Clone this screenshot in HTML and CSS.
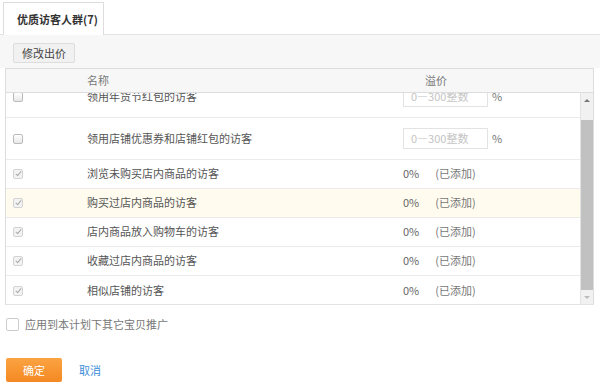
FILE: index.html
```html
<!DOCTYPE html>
<html lang="zh-CN">
<head>
	<meta charset="UTF-8">
	<title>优质访客人群</title>
	<link rel="stylesheet" href="styles.css">
</head>
<body>
	<div class="tabs">
		<div class="tab on">优质访客人群(7)</div>
	</div>
	<div class="toolbar">
		<a href="javascript:;" class="btn">修改出价</a>
	</div>
	<div class="grid">
		<div class="grid-head">
			<span class="cell-chk"></span>
			<span class="cell-name">名称</span>
			<span class="cell-price head-price">溢价</span>
		</div>
		<div class="grid-body">
			<div class="rows">
				<!-- 列表已向下滚动一点，第一行被表头遮住一部分 -->
				<div class="list">
					<div class="row tall">
						<span class="cell-chk"><i class="chk"></i></span>
						<span class="cell-name">领用年货节红包的访客</span>
						<span class="cell-price"><span class="ipt">0—300整数</span><span class="pct">%</span></span>
					</div>
					<div class="row tall">
						<span class="cell-chk"><i class="chk"></i></span>
						<span class="cell-name">领用店铺优惠券和店铺红包的访客</span>
						<span class="cell-price"><span class="ipt">0—300整数</span><span class="pct">%</span></span>
					</div>
					<div class="row">
						<span class="cell-chk"><i class="chk checked"></i></span>
						<span class="cell-name">浏览未购买店内商品的访客</span>
						<span class="cell-price">0%<span class="added">(已添加)</span></span>
					</div>
					<div class="row hover">
						<span class="cell-chk"><i class="chk checked"></i></span>
						<span class="cell-name">购买过店内商品的访客</span>
						<span class="cell-price">0%<span class="added">(已添加)</span></span>
					</div>
					<div class="row">
						<span class="cell-chk"><i class="chk checked"></i></span>
						<span class="cell-name">店内商品放入购物车的访客</span>
						<span class="cell-price">0%<span class="added">(已添加)</span></span>
					</div>
					<div class="row">
						<span class="cell-chk"><i class="chk checked"></i></span>
						<span class="cell-name">收藏过店内商品的访客</span>
						<span class="cell-price">0%<span class="added">(已添加)</span></span>
					</div>
					<div class="row">
						<span class="cell-chk"><i class="chk checked"></i></span>
						<span class="cell-name">相似店铺的访客</span>
						<span class="cell-price">0%<span class="added">(已添加)</span></span>
					</div>
				</div>
			</div>
			<div class="scrollbar">
				<span class="arr up"></span>
				<span class="thumb"></span>
				<span class="arr down"></span>
			</div>
		</div>
	</div>
	<label class="apply"><i class="box"></i>应用到本计划下其它宝贝推广</label>
	<div class="actions">
		<a href="javascript:;" class="btn-ok">确定</a>
		<a href="javascript:;" class="cancel">取消</a>
	</div>
</body>
</html>
```
FILE: styles.css
```css
*{margin:0;padding:0;box-sizing:border-box;text-decoration:none;}
body{font:11px/1.4 "Noto Sans CJK SC","Liberation Sans",sans-serif;color:#555;background:#fff;}
.tabs{padding:2px 0 0 3px;height:34px;}
.tab{width:101px;height:33px;border:1px solid #ddd;border-bottom:none;background:#fff;position:relative;z-index:1;
	font-weight:bold;color:#333;line-height:32px;padding-left:13px;}
.toolbar{height:34px;background:#f7f7f7;border-top:1px solid #e3e3e3;padding:8px 0 0 13px;}
.btn{display:inline-block;height:20px;line-height:18px;padding:0 8px;border:1px solid #ddd;background:#f1f1f1;color:#444;border-radius:2px;}

.grid{width:589px;margin-left:5px;border-left:1px solid #ddd;border-right:1px solid #ddd;border-bottom:1px solid #e3e3e3;}
.grid-head{display:flex;align-items:center;height:25px;background:#f7f7f7;border-top:1px solid #ddd;border-bottom:1px solid #ddd;color:#777;}
.cell-chk{width:81px;padding-left:7px;display:flex;align-items:center;}
.cell-name{width:316px;}
.cell-price{display:flex;align-items:center;color:#666;}
.head-price{padding-left:22px;color:#777;}

.grid-body{display:flex;height:211px;}
.rows{flex:1;overflow:hidden;border-right:1px solid #e3e3e3;}
.list{margin-top:-17px;}
.row{display:flex;align-items:center;height:29px;border-bottom:1px solid #ebebeb;}
.row:last-child{border-bottom:none;}
.row.tall{height:42px;}
.row.hover{background:#fffcef;}

.chk{display:block;width:10px;height:10px;border:1px solid #bbb;border-radius:2px;background:linear-gradient(#fff,#e8e8e8);}
.chk.checked{border-color:#d3d3d3;background:#f3f3f3;position:relative;}
.chk.checked:after{content:"";position:absolute;left:3px;top:0;width:2px;height:5px;border:solid #aaa;border-width:0 1.5px 1.5px 0;transform:rotate(40deg);}

.ipt{display:block;width:85px;height:21px;line-height:19px;border:1px solid #e3e3e3;padding-left:7px;color:#c4c4c4;background:#fff;}
.pct{margin-left:4px;color:#777;}
.added{margin-left:16px;color:#777;}

.scrollbar{width:12px;background:#f1f1f1;display:flex;flex-direction:column;align-items:center;}
.arr{width:0;height:0;border-left:3px solid transparent;border-right:3px solid transparent;}
.arr.up{margin-top:6px;border-bottom:3px solid #777;}
.arr.down{margin-top:6px;border-top:3px solid #bbb;}
.thumb{width:12px;height:170px;margin-top:18px;background:#c1c1c1;}

.apply{display:flex;align-items:center;margin:12px 0 0 6px;color:#777;}
.box{width:13px;height:13px;border:1px solid #ccc;border-radius:2px;margin-right:6px;background:#fff;}
.actions{display:flex;align-items:center;margin:26px 0 0 6px;}
.btn-ok{display:block;width:56px;height:24px;line-height:24px;text-align:center;color:#fff;border-radius:2px;background:linear-gradient(#fba342,#f48922);}
.cancel{margin-left:17px;color:#3d8ed8;}
```
